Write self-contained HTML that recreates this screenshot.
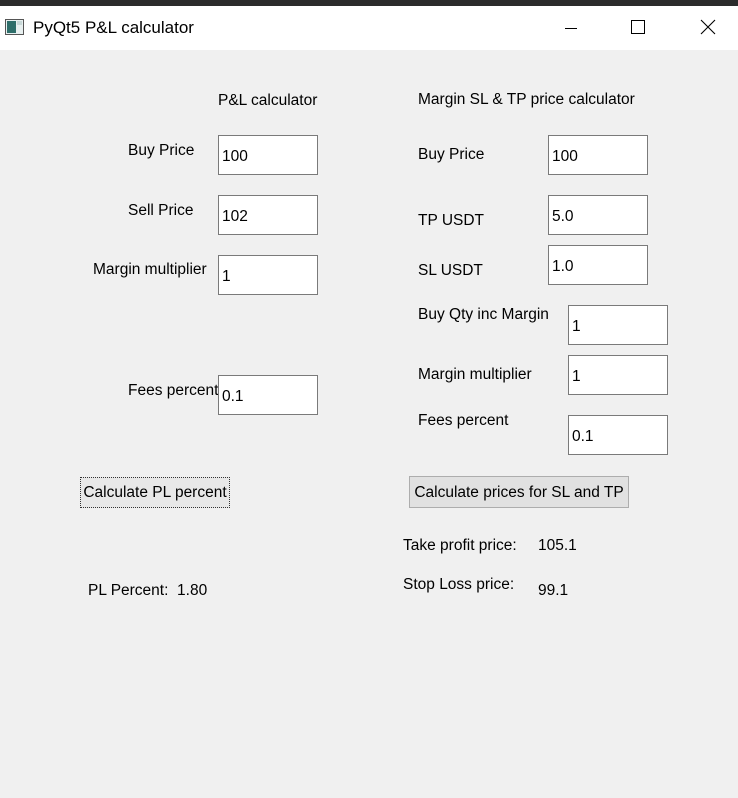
<!DOCTYPE html>
<html><head><style>
body{margin:0;width:738px;height:798px;background:#f0f0f0;position:relative;overflow:hidden;font-family:"Liberation Sans",sans-serif;font-size:15.5px;color:#000}
.top{position:absolute;left:0;top:0;width:738px;height:6px;background:#2b2b2b}
.tb{position:absolute;left:0;top:6px;width:738px;height:44px;background:#fff}
.l{position:absolute;line-height:18px;white-space:nowrap}
.i{position:absolute;width:98px;height:38px;background:#fff;border:1px solid #7a7a7a;box-sizing:content-box}
.i span{position:absolute;left:3px;top:12px;line-height:18px}
.b{position:absolute;background:#e1e1e1;border:1px solid #adadad;box-sizing:border-box;text-align:center;line-height:31px}
</style></head><body>
<div class="top"></div>
<div class="tb">
 <svg style="position:absolute;left:5px;top:12px" width="20" height="18"><rect x="0.5" y="1.5" width="18" height="15" fill="#e8f0f0" stroke="#555"/><rect x="2" y="3" width="9" height="12" fill="#2e6e6a"/><rect x="12" y="3" width="5" height="4" fill="#c8d8d8"/></svg>
 <div class="l" style="left:33px;top:13px;font-size:17px">PyQt5 P&amp;L calculator</div>
 <svg style="position:absolute;left:560px;top:10px" width="170" height="30"><line x1="5" y1="12.5" x2="17" y2="12.5" stroke="#000"/><rect x="71.5" y="4.5" width="13" height="13" fill="none" stroke="#000"/><path d="M141 4 L155 18 M155 4 L141 18" stroke="#000" stroke-width="1.1"/></svg>
</div>

<div class="l" style="left:218px;top:92px">P&amp;L calculator</div>
<div class="l" style="left:128px;top:142px">Buy Price</div>
<div class="l" style="left:128px;top:202px">Sell Price</div>
<div class="l" style="left:93px;top:261px">Margin multiplier</div>
<div class="l" style="left:128px;top:382px">Fees percent</div>

<div class="i" style="left:218px;top:135px"><span>100</span></div>
<div class="i" style="left:218px;top:195px"><span>102</span></div>
<div class="i" style="left:218px;top:255px"><span>1</span></div>
<div class="i" style="left:218px;top:375px"><span>0.1</span></div>

<div class="l" style="left:418px;top:91px">Margin SL &amp; TP price calculator</div>
<div class="l" style="left:418px;top:146px">Buy Price</div>
<div class="l" style="left:418px;top:212px">TP USDT</div>
<div class="l" style="left:418px;top:262px">SL USDT</div>
<div class="l" style="left:418px;top:306px">Buy Qty inc Margin</div>
<div class="l" style="left:418px;top:366px">Margin multiplier</div>
<div class="l" style="left:418px;top:412px">Fees percent</div>

<div class="i" style="left:548px;top:135px"><span>100</span></div>
<div class="i" style="left:548px;top:195px"><span>5.0</span></div>
<div class="i" style="left:548px;top:245px"><span>1.0</span></div>
<div class="i" style="left:568px;top:305px"><span>1</span></div>
<div class="i" style="left:568px;top:355px"><span>1</span></div>
<div class="i" style="left:568px;top:415px"><span>0.1</span></div>

<div class="b" style="left:80px;top:477px;width:150px;height:31px;border:1px dotted #333;background:#e8e8e8;line-height:30px">Calculate PL percent</div>
<div class="b" style="left:409px;top:476px;width:220px;height:32px">Calculate prices for SL and TP</div>

<div class="l" style="left:403px;top:537px">Take profit price:</div>
<div class="l" style="left:538px;top:537px">105.1</div>
<div class="l" style="left:403px;top:576px">Stop Loss price:</div>
<div class="l" style="left:538px;top:582px">99.1</div>
<div class="l" style="left:88px;top:582px">PL Percent:&nbsp; 1.80</div>
</body></html>
